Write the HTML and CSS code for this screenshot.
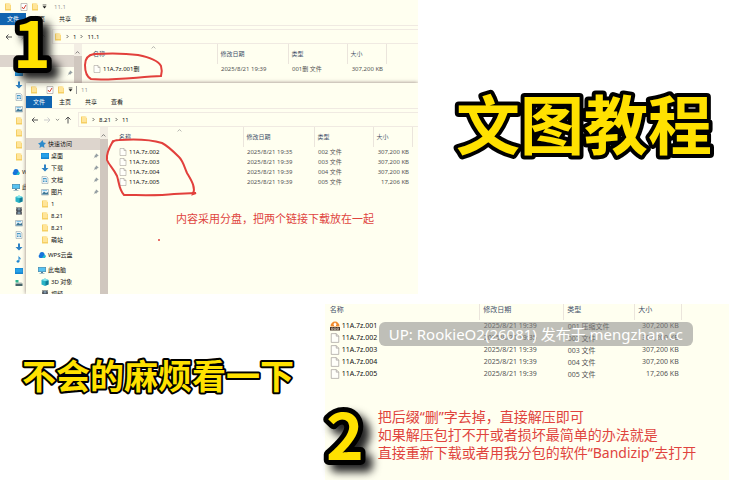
FILE: index.html
```html
<!DOCTYPE html>
<html lang="zh-CN">
<head>
    <meta charset="UTF-8">
    <meta name="viewport" content="width=device-width, initial-scale=1.0">
    <title>文图教程</title>
    <link rel="stylesheet" href="styles.css">
</head>
<body>
    <!-- shared icons -->
    <svg class="sprite" aria-hidden="true">
        <symbol id="folder" viewBox="0 0 16 16"><path d="M2 1h9v3h3v11H2z" fill="#f5cf63"/><path d="M4 1h9v11H4z" fill="#ffe59a"/></symbol>
        <symbol id="check" viewBox="0 0 16 16"><path d="M2 1h12v14H2z" fill="#fff" stroke="#8b8583"/><path d="M4 8l3 4 5-8" fill="none" stroke="#d3402f" stroke-width="2"/></symbol>
        <symbol id="file" viewBox="0 0 16 16"><path d="M2 1h8l4 4v10H2z" fill="#fffffa" stroke="#96918d"/><path d="M10 1v4h4" fill="none" stroke="#96918d"/></symbol>
        <symbol id="star" viewBox="0 0 16 16"><path d="M9 0l2 5 5 1-4 4 1 6-5-3-5 3 1-6-4-3 5-2z" fill="#2e8bcb"/></symbol>
        <symbol id="desktop" viewBox="0 0 16 16"><path d="M0 2h16v12H0z" fill="#1583cf"/><path d="M1 3h14v8H1z" fill="#27a1e8"/></symbol>
        <symbol id="down" viewBox="0 0 16 16"><path d="M6 1h4v7h5l-7 7-7-7h5z" fill="#2d82c4"/></symbol>
        <symbol id="doc" viewBox="0 0 16 16"><path d="M2 1h9l3 3v11H2z" fill="#eef5f7" stroke="#8a9ba3"/><path d="M4 5h7M4 8h3M9 8h3M4 11h3M9 11h3" stroke="#4b9bc6" stroke-width="2"/></symbol>
        <symbol id="pic" viewBox="0 0 16 16"><path d="M1 3h14v11H1z" fill="#e9f4f9" stroke="#7e8d96"/><path d="M2 12l4-5 4 3 4-2v5H2z" fill="#3d7896"/><path d="M3 5h9" stroke="#82c7ed" stroke-width="2"/></symbol>
        <symbol id="cloud" viewBox="0 0 16 16"><path d="M4 14a4 4 0 0 1-1-7 5 5 0 0 1 10 0 4 4 0 0 1 0 7z" fill="#1674db"/><path d="M8 14l5-7a4 4 0 0 1 0 7z" fill="#22bfcb"/></symbol>
        <symbol id="pc" viewBox="0 0 16 16"><path d="M0 2h16v10H0z" fill="#54829b"/><path d="M1 3h14v8H1z" fill="#59c3f1"/><path d="M6 12h4v2h3v1H3v-1h3z" fill="#54829b"/></symbol>
        <symbol id="cube" viewBox="0 0 16 16"><path d="M1 4l7-3 7 3v9l-7 3-7-3z" fill="#28b3c6"/><path d="M1 4l7-3 7 3-7 2z" fill="#8ae6ec"/><path d="M9 7l6-2v8l-6 2z" fill="#127c96"/></symbol>
        <symbol id="video" viewBox="0 0 16 16"><path d="M2 1h12v14H2z" fill="#3b3d42"/><path d="M5 2h6v5H5zM5 9h6v5H5z" fill="#7b93a5"/><path d="M3 2v12M13 2v12" stroke="#e6e6e0" stroke-dasharray="2 1"/></symbol>
        <symbol id="music" viewBox="0 0 16 16"><path d="M7 1c1 4 6 4 4 9 0-3-2-3-2-3v6c0 3-6 3-6 0 0-2 3-3 4-2z" fill="#1b83cf"/></symbol>
        <symbol id="drive" viewBox="0 0 16 16"><path d="M1 9h14v5H1z" fill="#46656a"/><path d="M1 9l2-2h10l2 2z" fill="#a3b1af"/><path d="M1 2h6v5H1z" fill="#2db48f"/></symbol>
        <symbol id="pin" viewBox="0 0 16 16"><path d="M9 2l5 5-3 1-3 4-4-4 4-3zM6 10l-4 4" fill="#95a0a5" stroke="#6d7a80"/></symbol>
        <symbol id="archive" viewBox="0 0 20 20"><path d="M1 11a9 10 0 0 1 18 0z" fill="#f08a2c"/><path d="M10 3l4 4h-2v3H8V7H6z" fill="#fff"/><path d="M0 12h20v7H0z" fill="#46362b"/><path d="M3 14h3v3H3zM8 14h4v3H8zM14 14h3v3h-3z" fill="none" stroke="#e9dfd2"/></symbol>
        <symbol id="back" viewBox="0 0 16 16"><path d="M14 8H2M7 3L2 8l5 5" fill="none" stroke="currentColor" stroke-width="2"/></symbol>
        <symbol id="forward" viewBox="0 0 16 16"><path d="M2 8h12M9 3l5 5-5 5" fill="none" stroke="currentColor" stroke-width="2"/></symbol>
        <symbol id="up" viewBox="0 0 16 16"><path d="M8 15V2M3 7l5-5 5 5" fill="none" stroke="currentColor" stroke-width="2"/></symbol>
        <symbol id="caret" viewBox="0 0 16 16"><path d="M2 3h12" stroke="currentColor" stroke-width="2"/><path d="M2 7h12l-6 7z" fill="currentColor"/></symbol>
        <symbol id="chevron-down" viewBox="0 0 16 16"><path d="M3 6l5 5 5-5" fill="none" stroke="currentColor" stroke-width="2"/></symbol>
        <symbol id="chevron-right" viewBox="0 0 16 16"><path d="M5 3l5 5-5 5" fill="none" stroke="currentColor" stroke-width="2"/></symbol>
        <symbol id="chevron-up" viewBox="0 0 16 16"><path d="M2 11l6-6 6 6" fill="none" stroke="currentColor" stroke-width="2"/></symbol>
    </svg>

    <main>
        <section class="row row-top">
            <div class="stage">
                <div class="window">
                    <div class="titlebar">
                        <svg class="icon"><use href="#folder"/></svg>
                        <svg class="icon gap"><use href="#check"/></svg>
                        <svg class="icon"><use href="#folder"/></svg>
                        <svg class="icon mini"><use href="#caret"/></svg>
                        <span class="path">11.1</span>
                    </div>
                    <div class="tabs">
                        <button class="active">文件</button><button>主页</button><button>共享</button><button>查看</button>
                    </div>
                    <div class="toolbar">
                        <div class="nav">
                            <svg class="icon"><use href="#back"/></svg>
                            <svg class="icon off"><use href="#forward"/></svg>
                            <svg class="icon mini"><use href="#chevron-down"/></svg>
                            <svg class="icon"><use href="#up"/></svg>
                        </div>
                        <div class="address">
                            <svg class="icon"><use href="#folder"/></svg>
                            <svg class="icon mini"><use href="#chevron-right"/></svg>
                            <span>1</span>
                            <svg class="icon mini"><use href="#chevron-right"/></svg>
                            <span>11.1</span>
                        </div>
                    </div>
                    <div class="body">
                        <ul class="sidebar">
                            <li class="top selected"></li>
                            <li><svg class="icon"><use href="#desktop"/></svg><svg class="icon pin"><use href="#pin"/></svg></li>
                            <li><svg class="icon"><use href="#down"/></svg></li>
                            <li><svg class="icon"><use href="#doc"/></svg></li>
                            <li><svg class="icon"><use href="#pic"/></svg></li>
                            <li><svg class="icon"><use href="#folder"/></svg></li>
                            <li><svg class="icon"><use href="#folder"/></svg></li>
                            <li><svg class="icon"><use href="#folder"/></svg></li>
                            <li><svg class="icon"><use href="#folder"/></svg></li>
                            <li class="top spaced"><svg class="icon"><use href="#cloud"/></svg><a href="#">WPS云盘</a></li>
                            <li class="top spaced"><svg class="icon"><use href="#pc"/></svg><a href="#">此电脑</a></li>
                            <li><svg class="icon"><use href="#cube"/></svg></li>
                            <li><svg class="icon"><use href="#video"/></svg></li>
                            <li><svg class="icon"><use href="#pic"/></svg></li>
                            <li><svg class="icon"><use href="#doc"/></svg></li>
                            <li><svg class="icon"><use href="#down"/></svg></li>
                            <li><svg class="icon"><use href="#music"/></svg></li>
                            <li><svg class="icon"><use href="#desktop"/></svg></li>
                            <li><svg class="icon"><use href="#drive"/></svg></li>
                        </ul>
                        <div class="scrollbar"><svg class="icon mini"><use href="#chevron-up"/></svg></div>
                        <div class="list">
                            <svg class="icon mini sort"><use href="#chevron-up"/></svg>
                            <table>
                                <thead>
                                    <tr><th class="name">名称</th><th class="date">修改日期</th><th class="type">类型</th><th class="size">大小</th><th></th></tr>
                                </thead>
                                <tbody>
                                    <tr><td><svg class="icon"><use href="#file"/></svg>11A.7z.001删</td><td>2025/8/21 19:39</td><td>001删 文件</td><td>307,200 KB</td><td></td></tr>
                                </tbody>
                            </table>
                        </div>
                    </div>
                </div>

                <div class="window front">
                    <div class="titlebar">
                        <svg class="icon"><use href="#folder"/></svg>
                        <svg class="icon gap"><use href="#check"/></svg>
                        <svg class="icon"><use href="#folder"/></svg>
                        <svg class="icon mini"><use href="#caret"/></svg>
                        <span class="path line">11</span>
                    </div>
                    <div class="tabs">
                        <button class="active">文件</button><button>主页</button><button>共享</button><button>查看</button>
                    </div>
                    <div class="toolbar">
                        <div class="nav">
                            <svg class="icon"><use href="#back"/></svg>
                            <svg class="icon off"><use href="#forward"/></svg>
                            <svg class="icon mini"><use href="#chevron-down"/></svg>
                            <svg class="icon"><use href="#up"/></svg>
                        </div>
                        <div class="address">
                            <svg class="icon"><use href="#folder"/></svg>
                            <svg class="icon mini"><use href="#chevron-right"/></svg>
                            <span>8.21</span>
                            <svg class="icon mini"><use href="#chevron-right"/></svg>
                            <span>11</span>
                        </div>
                    </div>
                    <div class="body">
                        <ul class="sidebar">
                            <li class="top selected"><svg class="icon"><use href="#star"/></svg><a href="#">快速访问</a></li>
                            <li><svg class="icon"><use href="#desktop"/></svg><a href="#">桌面</a><svg class="icon pin"><use href="#pin"/></svg></li>
                            <li><svg class="icon"><use href="#down"/></svg><a href="#">下载</a><svg class="icon pin"><use href="#pin"/></svg></li>
                            <li><svg class="icon"><use href="#doc"/></svg><a href="#">文档</a><svg class="icon pin"><use href="#pin"/></svg></li>
                            <li><svg class="icon"><use href="#pic"/></svg><a href="#">图片</a><svg class="icon pin"><use href="#pin"/></svg></li>
                            <li><svg class="icon"><use href="#folder"/></svg><a href="#">1</a></li>
                            <li><svg class="icon"><use href="#folder"/></svg><a href="#">8.21</a></li>
                            <li><svg class="icon"><use href="#folder"/></svg><a href="#">8.21</a></li>
                            <li><svg class="icon"><use href="#folder"/></svg><a href="#">萌站</a></li>
                            <li class="top spaced"><svg class="icon"><use href="#cloud"/></svg><a href="#">WPS云盘</a></li>
                            <li class="top spaced"><svg class="icon"><use href="#pc"/></svg><a href="#">此电脑</a></li>
                            <li><svg class="icon"><use href="#cube"/></svg><a href="#">3D 对象</a></li>
                            <li><svg class="icon"><use href="#video"/></svg><a href="#">视频</a></li>
                        </ul>
                        <div class="scrollbar"><svg class="icon mini"><use href="#chevron-up"/></svg></div>
                        <div class="list">
                            <svg class="icon mini sort"><use href="#chevron-up"/></svg>
                            <table>
                                <thead>
                                    <tr><th class="name">名称</th><th class="date">修改日期</th><th class="type">类型</th><th class="size">大小</th><th></th></tr>
                                </thead>
                                <tbody>
                                    <tr><td><svg class="icon"><use href="#file"/></svg>11A.7z.002</td><td>2025/8/21 19:35</td><td>002 文件</td><td>307,200 KB</td><td></td></tr>
                                    <tr><td><svg class="icon"><use href="#file"/></svg>11A.7z.003</td><td>2025/8/21 19:39</td><td>003 文件</td><td>307,200 KB</td><td></td></tr>
                                    <tr><td><svg class="icon"><use href="#file"/></svg>11A.7z.004</td><td>2025/8/21 19:39</td><td>004 文件</td><td>307,200 KB</td><td></td></tr>
                                    <tr><td><svg class="icon"><use href="#file"/></svg>11A.7z.005</td><td>2025/8/21 19:39</td><td>005 文件</td><td>17,206 KB</td><td></td></tr>
                                </tbody>
                            </table>
                            <p class="note note-small">内容采用分盘，把两个链接下载放在一起</p>
                        </div>
                    </div>
                </div>

                <!-- red pen marks -->
                <svg class="marks" viewBox="0 0 418 294" aria-hidden="true">
                    <path d="M94 54C88 55 85 58 85 65C85 72 87 77 91 79C108 81 138 77 161 76C162 72 162 69 161 66C158 60 148 57 138 55C124 53 111 53 94 54"/>
                    <path d="M113 141C109 148 106 155 107 160C109 165 114 169 117 176C119 182 119 190 124 195C139 195 158 196 174 194L196 193L193 194C196 187 191 180 187 173C184 166 183 161 179 157C172 150 168 146 162 143C149 139 133 139 119 140C115 140 113 141 112 143"/>
                    <circle cx="159" cy="240" r="1"/>
                </svg>
                <svg class="outlined step step-one"><text x="0" y="56">1</text></svg>
            </div>
            <h1><svg class="outlined title"><text x="0" y="56">文图教程</text></svg></h1>
        </section>

        <section class="row row-bottom">
            <h2><svg class="outlined subtitle"><text x="0" y="30">不会的麻烦看一下</text></svg></h2>
            <div class="panel">
                <table>
                    <thead>
                        <tr><th class="name">名称</th><th class="date">修改日期</th><th class="type">类型</th><th class="size">大小</th><th></th></tr>
                    </thead>
                    <tbody>
                        <tr><td><svg class="icon"><use href="#archive"/></svg>11A.7z.001</td><td>2025/8/21 19:39</td><td>001 压缩文件</td><td>307,200 KB</td><td></td></tr>
                        <tr><td><svg class="icon"><use href="#file"/></svg>11A.7z.002</td><td>2025/8/21 19:35</td><td>002 文件</td><td>307,200 KB</td><td></td></tr>
                        <tr><td><svg class="icon"><use href="#file"/></svg>11A.7z.003</td><td>2025/8/21 19:39</td><td>003 文件</td><td>307,200 KB</td><td></td></tr>
                        <tr><td><svg class="icon"><use href="#file"/></svg>11A.7z.004</td><td>2025/8/21 19:39</td><td>004 文件</td><td>307,200 KB</td><td></td></tr>
                        <tr><td><svg class="icon"><use href="#file"/></svg>11A.7z.005</td><td>2025/8/21 19:39</td><td>005 文件</td><td>17,206 KB</td><td></td></tr>
                    </tbody>
                </table>
                <div class="watermark">UP: RookieO2(26081) 发布于 mengzhan.cc</div>
                <p class="note">把后缀“删”字去掉，直接解压即可<br>如果解压包打不开或者损坏最简单的办法就是<br>直接重新下载或者用我分包的软件“Bandizip”去打开</p>
                <svg class="outlined step step-two"><text x="0" y="56">2</text></svg>
            </div>
        </section>
    </main>
</body>
</html>
```

FILE: styles.css
```css
* {
  padding: 0;
  margin: 0;
  box-sizing: border-box;
}
body {
  font-family: 'Noto Sans', 'Noto Sans CJK SC', sans-serif;
  font-size: 6px;
  color: #111;
  background-color: #fff;
}
main {
  height: 100vh;
  min-height: 480px;
  display: grid;
  grid-template-rows: minmax(0, 5fr) minmax(0, 3fr);
  gap: 10px;
}
.sprite {
  display: none;
}
.row {
  display: grid;
}
.row-top {
  grid-template-columns: 17fr 13fr;
}
.row-bottom {
  grid-template-columns: 11fr 14fr;
}
.icon {
  width: 8px;
  height: 8px;
  flex: none;
}
.icon.mini {
  width: 5px;
  height: 5px;
}

/* explorer windows */
.stage {
  position: relative;
  overflow: hidden;
}
.window {
  height: 100%;
  display: flex;
  flex-direction: column;
  line-height: 10px;
  background-color: #fffff0;
}
.window.front {
  position: absolute;
  top: 83px;
  right: 0;
  bottom: 0;
  left: 26px;
  height: auto;
  box-shadow: 0 0 4px #8d7b76;
}
.titlebar {
  height: 13px;
  flex: none;
  display: flex;
  align-items: center;
  gap: 3px;
  padding-left: 4px;
}
.titlebar .gap {
  margin-left: 5px;
}
.path {
  color: #999;
  padding-left: 4px;
}
.path.line {
  line-height: 8px;
  border-left: 1px solid #999;
}
.tabs {
  height: 12px;
  flex: none;
  display: flex;
}
.tabs button {
  border: none;
  padding: 0 7px;
  font: inherit;
  color: #111;
  background: none;
}
.tabs .active {
  color: #fff;
  background-color: #1064b0;
}
.toolbar {
  flex: none;
  display: flex;
  padding-top: 3px;
  border-top: 1px solid #f0eae2;
}
.nav {
  width: 52px;
  display: flex;
  align-items: center;
  gap: 4px;
  padding-left: 5px;
  color: #555;
}
.nav .off {
  color: #ccc;
}
.address {
  flex: 1;
  height: 15px;
  display: flex;
  align-items: center;
  gap: 3px;
  padding-left: 1px;
  border: 1px solid #f0eae2;
  border-right: none;
}
.body {
  flex: 1;
  min-height: 0;
  display: flex;
  overflow: hidden;
}
.sidebar {
  width: 74px;
  flex: none;
  padding-top: 11px;
  list-style: none;
}
.sidebar li {
  height: 12px;
  display: flex;
  align-items: center;
  gap: 2px;
  padding-left: 15px;
  padding-right: 1px;
}
.sidebar .top {
  padding-left: 12px;
}
.sidebar .selected {
  background-color: #ddd5cd;
}
.sidebar .spaced {
  margin-top: 3px;
}
.sidebar a {
  color: #111;
  text-decoration: none;
  white-space: nowrap;
}
.sidebar .pin {
  width: 6px;
  height: 6px;
  margin-left: auto;
}
.scrollbar {
  width: 8px;
  flex: none;
  padding: 4px 1px;
  color: #444;
  background: linear-gradient(#f3eee4 12px, #d0c7bf 12px);
}
.list {
  flex: 1;
  min-width: 0;
  position: relative;
}
.sort {
  position: absolute;
  top: 1px;
  left: 69px;
  color: #888;
}

/* file tables */
table {
  width: 100%;
  table-layout: fixed;
  border-collapse: collapse;
  white-space: nowrap;
}
th {
  height: 20px;
  padding: 0 0 0 3px;
  font-weight: 400;
  text-align: left;
  color: #44516a;
  border-left: 1px solid #ebe5dc;
}
th.name {
  width: 135px;
  padding-left: 11px;
  border-left: none;
}
th.date {
  width: 71px;
}
th.type {
  width: 59px;
}
th.size {
  width: 39px;
}
td {
  height: 10px;
  padding: 0 0 0 4px;
  color: #555;
}
td:first-child {
  padding-left: 11px;
  color: #111;
}
td:nth-child(4) {
  padding: 0 3px 0 0;
  text-align: right;
}
td .icon {
  margin-right: 2px;
  vertical-align: middle;
}
.note {
  font-size: 14px;
  line-height: 18px;
  color: #e0443e;
  white-space: nowrap;
}
.note-small {
  padding: 23px 0 0 68px;
  font-size: 11px;
}
.marks {
  position: absolute;
  top: 0;
  left: 0;
  width: 418px;
  height: 294px;
  fill: none;
  stroke: #e2403c;
  stroke-width: 2;
  stroke-linecap: round;
}
.marks circle {
  fill: #e2403c;
  stroke: none;
}

/* yellow captions with a black outline */
h1,
h2 {
  place-self: center;
}
h1 {
  padding: 0 0 44px 12px;
}
h2 {
  padding: 0 8px 32px 0;
}
.outlined {
  display: block;
  overflow: visible;
  font-family: 'Noto Sans CJK SC', sans-serif;
  font-weight: 700;
  fill: #ffe100;
  stroke: #000;
  stroke-width: 10px;
  stroke-linejoin: round;
  paint-order: stroke fill;
}
.title {
  width: 256px;
  height: 64px;
  font-size: 64px;
  stroke-width: 8px;
}
.subtitle {
  width: 272px;
  height: 34px;
  font-size: 34px;
  stroke-width: 4px;
}
.step {
  position: absolute;
  width: 38px;
  height: 64px;
  font-size: 64px;
  filter: drop-shadow(7px 7px 4px #222);
}
.step-one {
  top: 12px;
  left: 13px;
}
.step-two {
  bottom: 12px;
  left: 1px;
}

/* second screenshot */
.panel {
  position: relative;
  margin-right: 9px;
  font-size: 7px;
  background-color: #fffff0;
}
.panel th {
  height: 14px;
  padding-bottom: 6px;
}
.panel th.name,
.panel td:first-child {
  padding-left: 5px;
}
.panel th.name {
  width: 155px;
}
.panel th.date {
  width: 84px;
}
.panel th.type {
  width: 71px;
}
.panel th.size {
  width: 47px;
}
.panel td {
  height: 12px;
}
.panel td .icon {
  width: 10px;
  height: 10px;
}
.panel .note {
  padding: 28px 0 0 53px;
}
.watermark {
  position: absolute;
  top: 18px;
  right: 36px;
  padding: 0 10px;
  font-size: 15px;
  line-height: 24px;
  color: #fff;
  white-space: nowrap;
  border-radius: 6px;
  background-color: rgba(128, 128, 128, 0.5);
}
```
